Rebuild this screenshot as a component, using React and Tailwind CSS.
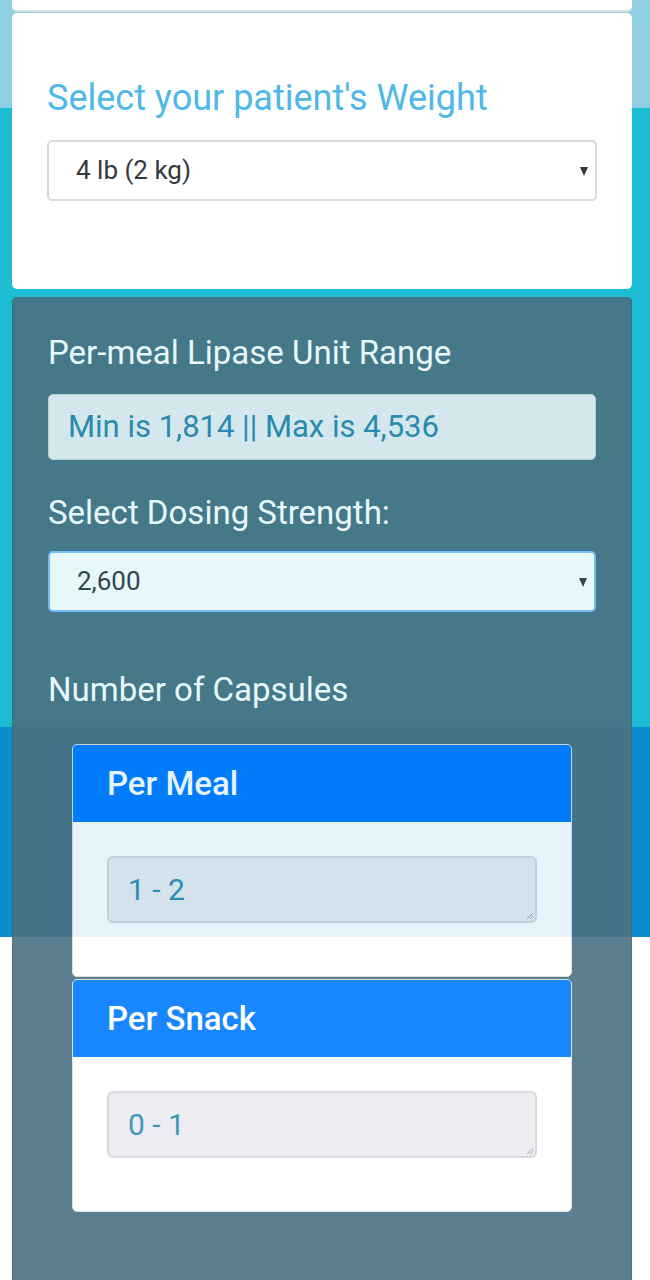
import React from 'react';

const Caret = () => (
    <svg width="10" height="12" viewBox="0 0 10 12" className="shrink-0">
        <path d="M1 2h8L5 11z" fill="#343a40" />
    </svg>
);

const SelectBox = ({ value, className }) => (
    <div
        className={`flex h-[61px] items-center justify-between rounded-[5px] border-2 pl-[27px] pr-[6px] text-[26px] text-[#343a40] ${className}`}
    >
        <span>{value}</span>
        <Caret />
    </div>
);

const CapsuleCard = ({ title, value, headerClass }) => (
    <div className="overflow-hidden rounded-[5px] border border-[#dcdcdc] bg-white">
        <div
            className={`flex h-[77px] items-center px-[34px] text-[33px] font-medium text-white ${headerClass}`}
        >
            {title}
        </div>
        <div className="px-[34px] pb-[53px] pt-[34px]">
            <div className="relative flex h-[67px] items-center rounded-[6px] border-2 border-[#d3d7db] bg-[#e9ecef] px-[19px] text-[30px] text-[#2f8db3]">
                {value}
                <svg
                    width="6"
                    height="6"
                    viewBox="0 0 6 6"
                    className="absolute bottom-[2px] right-[2px]"
                >
                    <path d="M0 6L6 0M3 6L6 3" stroke="#9aa3aa" strokeWidth="1" />
                </svg>
            </div>
        </div>
    </div>
);

export default function App() {
    return (
        <div
            className="min-h-[1280px] w-full overflow-hidden bg-[linear-gradient(to_bottom,#8fcfe4_0px,#8fcfe4_108px,#1cbdd4_108px,#1cbdd4_727px,#0a8dcc_727px,#0a8dcc_937px,#ffffff_937px)] pl-[12px] pr-[18px]"
            style={{ fontFamily: 'Roboto, "Noto Sans", sans-serif' }}
        >
            <div className="h-[12px] rounded-b-[5px] border-b-2 border-[#dedede] bg-white" />

            <div className="mt-[1px] rounded-[5px] bg-white px-[35px] pb-[88px] pt-[64px]">
                <h2 className="text-[36px] leading-[1.2] text-[#4eb8e7]">
                    Select your patient's Weight
                </h2>
                <SelectBox
                    value="4 lb (2 kg)"
                    className="mt-[20px] border-[#dadada] bg-white"
                />
            </div>

            <div className="mt-[8px] rounded-t-[5px] border-x border-[#3f6676] bg-[#4a7282] px-[35px] pb-[60px] pt-[36px] opacity-90">
                <h3 className="text-[33px] leading-[1.2] text-white">
                    Per-meal Lipase Unit Range
                </h3>
                <div className="mt-[21px] flex h-[66px] items-center rounded-[5px] border border-[#c8d2d8] bg-[#e9ecef] px-[19px] text-[31px] text-[#2a85ab]">
                    Min is 1,814 || Max is 4,536
                </div>

                <h3 className="mt-[33px] text-[33px] leading-[1.2] text-white">
                    Select Dosing Strength:
                </h3>
                <SelectBox
                    value="2,600"
                    className="mt-[19px] border-[#80bdff] bg-white"
                />

                <h3 className="mt-[58px] text-[33px] leading-[1.2] text-white">
                    Number of Capsules
                </h3>

                <div className="mx-[24px] mt-[34px] flex flex-col gap-[2px]">
                    <CapsuleCard
                        title="Per Meal"
                        value="1 - 2"
                        headerClass="bg-[#007bff]"
                    />
                    <CapsuleCard
                        title="Per Snack"
                        value="0 - 1"
                        headerClass="bg-[#007bff]"
                    />
                </div>

                <p className="mt-[61px] text-center text-[32px] leading-[1.2] text-white">
                    Total Capsules Per Day
                </p>
            </div>
        </div>
    );
}
